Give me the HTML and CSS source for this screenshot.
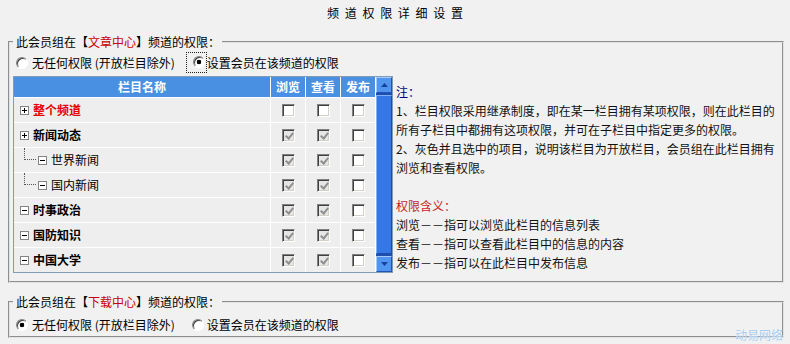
FILE: index.html
```html
<!DOCTYPE html>
<html lang="zh-CN">
<head>
<meta charset="utf-8">
<title>频道权限详细设置</title>
<link rel="stylesheet" href="styles.css">
</head>
<body>
<div class="title">频 道 权 限 详 细 设 置</div>

<fieldset class="fs fs1">
  <legend>此会员组在【<span class="red">文章中心</span>】频道的权限：</legend>
  <div class="radios">
    <label class="opt"><input type="radio" name="r1" class="rd">无任何权限 (开放栏目除外)</label>
    <label class="opt opt-focus"><span class="focus"><input type="radio" name="r1" class="rd" checked></span>设置会员在该频道的权限</label>
  </div>
  <div class="body">
    <div class="grid">
      <table class="tbl">
        <thead>
          <tr><th class="c-name">栏目名称</th><th class="c-ck">浏览</th><th class="c-ck">查看</th><th class="c-ck last">发布</th></tr>
        </thead>
        <tbody>
          <tr>
            <td><div class="node"><svg class="tg" width="9" height="9" viewBox="0 0 9 9"><rect x="0.5" y="0.5" width="8" height="8" fill="#fff" stroke="#848484"/><path d="M2 4.5h5M4.5 2v5" stroke="#000"/></svg><b class="hot">整个频道</b></div></td>
            <td><input type="checkbox" class="cb"></td>
            <td><input type="checkbox" class="cb"></td>
            <td class="last"><input type="checkbox" class="cb"></td>
          </tr>
          <tr>
            <td><div class="node"><svg class="tg" width="9" height="9" viewBox="0 0 9 9"><rect x="0.5" y="0.5" width="8" height="8" fill="#fff" stroke="#848484"/><path d="M2 4.5h5M4.5 2v5" stroke="#000"/></svg><b>新闻动态</b></div></td>
            <td><input type="checkbox" class="cb" checked disabled></td>
            <td><input type="checkbox" class="cb" checked disabled></td>
            <td class="last"><input type="checkbox" class="cb"></td>
          </tr>
          <tr>
            <td><div class="node child"><span class="branch"></span><svg class="tg" width="9" height="9" viewBox="0 0 9 9"><rect x="0.5" y="0.5" width="8" height="8" fill="#fff" stroke="#848484"/><path d="M2 4.5h5" stroke="#000"/></svg><span>世界新闻</span></div></td>
            <td><input type="checkbox" class="cb" checked disabled></td>
            <td><input type="checkbox" class="cb" checked disabled></td>
            <td class="last"><input type="checkbox" class="cb"></td>
          </tr>
          <tr>
            <td><div class="node child"><span class="branch"></span><svg class="tg" width="9" height="9" viewBox="0 0 9 9"><rect x="0.5" y="0.5" width="8" height="8" fill="#fff" stroke="#848484"/><path d="M2 4.5h5" stroke="#000"/></svg><span>国内新闻</span></div></td>
            <td><input type="checkbox" class="cb" checked disabled></td>
            <td><input type="checkbox" class="cb" checked disabled></td>
            <td class="last"><input type="checkbox" class="cb"></td>
          </tr>
          <tr>
            <td><div class="node"><svg class="tg" width="9" height="9" viewBox="0 0 9 9"><rect x="0.5" y="0.5" width="8" height="8" fill="#fff" stroke="#848484"/><path d="M2 4.5h5" stroke="#000"/></svg><b>时事政治</b></div></td>
            <td><input type="checkbox" class="cb" checked disabled></td>
            <td><input type="checkbox" class="cb" checked disabled></td>
            <td class="last"><input type="checkbox" class="cb"></td>
          </tr>
          <tr>
            <td><div class="node"><svg class="tg" width="9" height="9" viewBox="0 0 9 9"><rect x="0.5" y="0.5" width="8" height="8" fill="#fff" stroke="#848484"/><path d="M2 4.5h5" stroke="#000"/></svg><b>国防知识</b></div></td>
            <td><input type="checkbox" class="cb" checked disabled></td>
            <td><input type="checkbox" class="cb" checked disabled></td>
            <td class="last"><input type="checkbox" class="cb"></td>
          </tr>
          <tr>
            <td><div class="node"><svg class="tg" width="9" height="9" viewBox="0 0 9 9"><rect x="0.5" y="0.5" width="8" height="8" fill="#fff" stroke="#848484"/><path d="M2 4.5h5" stroke="#000"/></svg><b>中国大学</b></div></td>
            <td><input type="checkbox" class="cb" checked disabled></td>
            <td><input type="checkbox" class="cb" checked disabled></td>
            <td class="last"><input type="checkbox" class="cb"></td>
          </tr>
        </tbody>
      </table>
      <div class="scroll">
        <div class="sb-btn"><svg width="7" height="4" viewBox="0 0 7 4"><path d="M0 4L3.5 0L7 4Z" fill="#17409c"/></svg></div>
        <div class="sb-thumb"></div>
        <div class="sb-btn"><svg width="7" height="4" viewBox="0 0 7 4"><path d="M0 0L3.5 4L7 0Z" fill="#17409c"/></svg></div>
      </div>
    </div>
    <div class="notes">
      <p class="n-title">注：</p>
      <p>1、栏目权限采用继承制度，即在某一栏目拥有某项权限，则在此栏目的<br>所有子栏目中都拥有这项权限，并可在子栏目中指定更多的权限。<br>2、灰色并且选中的项目，说明该栏目为开放栏目，会员组在此栏目拥有<br>浏览和查看权限。</p>
      <p class="n-red">权限含义：</p>
      <p>浏览－－指可以浏览此栏目的信息列表<br>查看－－指可以查看此栏目中的信息的内容<br>发布－－指可以在此栏目中发布信息</p>
    </div>
  </div>
</fieldset>

<fieldset class="fs fs2">
  <legend>此会员组在【<span class="red">下载中心</span>】频道的权限：</legend>
  <div class="radios">
    <label class="opt"><input type="radio" name="r2" class="rd" checked>无任何权限 (开放栏目除外)</label>
    <label class="opt opt-plain"><input type="radio" name="r2" class="rd">设置会员在该频道的权限</label>
  </div>
</fieldset>

<div class="wm">动易网络</div>
</body>
</html>
```

FILE: styles.css
```css
* { box-sizing: border-box; }
html, body { margin: 0; padding: 0; }
body {
  width: 790px;
  height: 344px;
  overflow: hidden;
  position: relative;
  background: #f1f1f1;
  color: #000;
  font-family: "Noto Sans CJK SC", "Noto Sans", sans-serif;
  font-size: 12px;
  line-height: 18px;
}
.title {
  height: 33px;
  line-height: 25px;
  text-align: center;
  word-spacing: 3px;
}
.fs {
  margin: 0 6px 0 8px;
  padding: 0 8px 8px 3px;
  border: 2px groove #e2e2e2;
  min-width: 0;
}
.fs2 { margin-top: 10px; padding-bottom: 1px; }
.fs legend {
  padding: 0 2px 0 3px;
  line-height: 18px;
}
.red { color: #c80000; }
.radios {
  display: flex;
  align-items: center;
  height: 21px;
  margin-top: 1px;
}
.fs2 .radios { margin-top: 3px; }
.opt {
  display: inline-flex;
  align-items: center;
  white-space: nowrap;
}
.opt-focus { margin-left: 11px; }
.opt-plain { margin-left: 17px; }
.opt-plain .rd { margin: 0 3px 0 0; }
.focus {
  display: inline-flex;
  border: 1px dotted #222;
  padding: 3px 1px 4px 6px;
}
.focus .rd { margin: 0; }
.rd {
  appearance: none;
  -webkit-appearance: none;
  flex: none;
  width: 12px;
  height: 12px;
  margin: 0 4px 0 3px;
  border-radius: 50%;
  border: 1px solid;
  border-color: #808080 #ffffff #ffffff #808080;
  box-shadow: inset 1px 1px 0 #404040;
  background: #fff;
}
.rd:checked {
  background: radial-gradient(circle at 50% 50%, #000 0, #000 2px, #fff 2.6px);
}

.body {
  display: flex;
  align-items: flex-start;
  margin-top: 3px;
}
.grid {
  display: flex;
  flex: none;
  width: 380px;
  border: 1px solid #7f9db9;
}
.tbl {
  border-collapse: separate;
  border-spacing: 0;
  table-layout: fixed;
  width: 361px;
}
.tbl th, .tbl td {
  box-sizing: content-box;
  padding: 0;
  border-right: 1px solid #fff;
  border-bottom: 1px solid #fff;
}
.tbl .last { border-right: 0; }
.tbl th {
  height: 20px;
  background: #4a90e2;
  color: #fff;
  font-weight: bold;
  text-align: center;
  line-height: 20px;
}
.c-name { width: 256px; }
.c-ck { width: 34px; }
.tbl td {
  height: 24px;
  background: #eeeeee;
  vertical-align: middle;
}
.tbl tbody tr:last-child td { border-bottom: 0; }
.node {
  display: flex;
  align-items: center;
  height: 24px;
  padding-left: 6px;
  white-space: nowrap;
}
.node b { font-weight: bold; }
.node .hot { color: #e60000; }
.tg { flex: none; margin-right: 4px; display: block; }
.child { padding-left: 10px; }
.branch {
  align-self: flex-start;
  flex: none;
  width: 12px;
  height: 12px;
  margin-right: 2px;
  border-left: 1px dotted #555;
  border-bottom: 1px dotted #555;
}
.cb {
  appearance: none;
  -webkit-appearance: none;
  display: block;
  position: relative;
  width: 13px;
  height: 13px;
  margin: 0 auto;
  border: 1px solid;
  border-color: #808080 #ffffff #ffffff #808080;
  box-shadow: inset 1px 1px 0 #404040, inset -1px -1px 0 #d4d0c8;
  background: #fff;
}
.cb:disabled { background: #e6e6e6; }
.cb:checked::after {
  content: "";
  position: absolute;
  left: 4px;
  top: 1px;
  width: 3px;
  height: 6px;
  border: solid #000;
  border-width: 0 2px 2px 0;
  transform: rotate(40deg);
}
.cb:disabled:checked::after { border-color: #8f8f8f; }

.scroll {
  flex: none;
  width: 17px;
  border-left: 1px solid #fff;
  display: flex;
  flex-direction: column;
  background: #1f4fae;
}
.sb-btn {
  flex: none;
  height: 16px;
  display: flex;
  align-items: center;
  justify-content: center;
  background: #5095ef;
  border: 1px solid;
  border-color: #a7c9f8 #2353b5 #2353b5 #a7c9f8;
}
.sb-thumb {
  flex: 1;
  margin: 2px 0;
  background: #3677e6;
  border: 1px solid;
  border-color: #7fb0f5 #1d4cab #1d4cab #7fb0f5;
}

.notes {
  margin-left: 3px;
  padding-top: 6px;
  line-height: 19px;
  white-space: nowrap;
  color: #111;
}
.notes p { margin: 0; }
.n-title { color: #000080; }
.n-red { color: #c81e1e; margin-top: 19px !important; }

.wm {
  position: absolute;
  right: 7px;
  bottom: 2px;
  color: #a8cdee;
  line-height: 14px;
  text-shadow: 0 0 1px #fff;
}
```
